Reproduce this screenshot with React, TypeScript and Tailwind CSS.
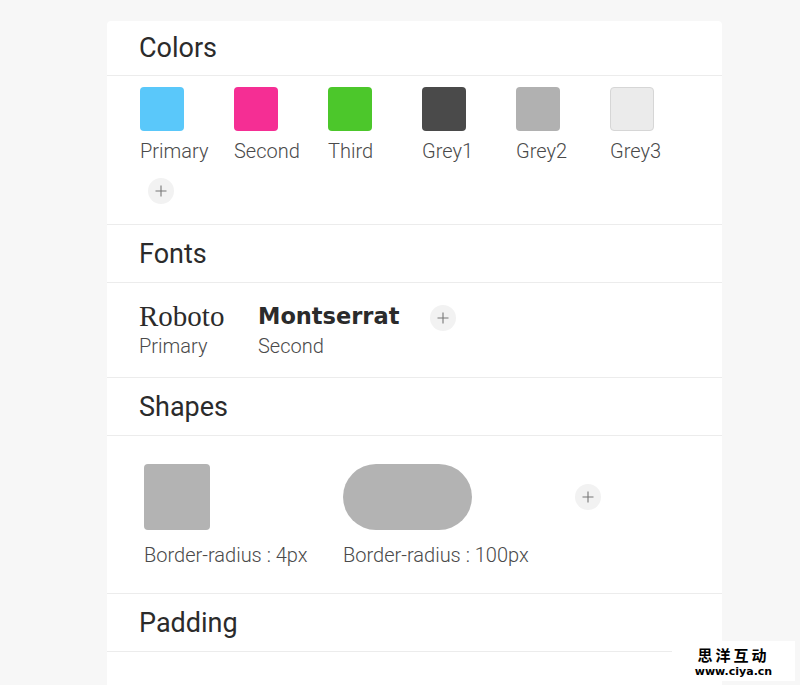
import React from "react"

const colors = [
    { name: "Primary", bg: "bg-[#5ac8fa]" },
    { name: "Second", bg: "bg-[#f52e94]" },
    { name: "Third", bg: "bg-[#4cc72b]" },
    { name: "Grey1", bg: "bg-[#4a4a4a]" },
    { name: "Grey2", bg: "bg-[#b1b1b1]" },
    { name: "Grey3", bg: "bg-[#ebebeb] border border-[#d6d6d6]" },
]

const PlusButton = ({ className = "" }: { className?: string }) => (
    <div className={`w-[26px] h-[26px] rounded-full bg-[#f2f2f2] flex items-center justify-center ${className}`}>
        <svg width="12" height="12" viewBox="0 0 12 12">
            <path d="M6 0.5v11M0.5 6h11" stroke="#777" strokeWidth="1.1" />
        </svg>
    </div>
)

const Header = ({ title, first = false }: { title: string; first?: boolean }) => (
    <div className={`${first ? "h-[55px]" : "h-[58px] pt-[2px]"} border-b border-[#ececec] flex items-center pl-8`}>
        <h2 className="text-[27px] text-[#2b2b2b] font-normal">{title}</h2>
    </div>
)

export default function App() {
    return (
        <div className="h-[685px] overflow-hidden bg-[#f7f7f7] relative font-['Roboto',sans-serif]">
            <div className="ml-[107px] mt-[21px] w-[615px] bg-white rounded-t-[4px]">

                <Header title="Colors" first />
                <div className="h-[149px] border-b border-[#ececec] pl-[33px] pt-[11px]">
                    <div className="flex">
                        {colors.map((c) => (
                            <div key={c.name} className="w-[94px] flex flex-col">
                                <div className={`w-[44px] h-[44px] rounded-[4px] ${c.bg}`}></div>
                                <p className="mt-[10px] text-[20px] leading-none font-light text-[#4a4a4a]">{c.name}</p>
                            </div>
                        ))}
                    </div>
                    <PlusButton className="ml-[8px] mt-[17px]" />
                </div>

                <Header title="Fonts" />
                <div className="h-[95px] border-b border-[#ececec] pl-8 pt-[19px] flex items-start">
                    <div className="w-[119px] flex flex-col">
                        <p className="h-[28px] text-[29px] leading-[28px] text-[#2b2b2b] font-['Liberation_Serif',serif]">Roboto</p>
                        <p className="mt-[6px] text-[20px] leading-none font-light text-[#4a4a4a]">Primary</p>
                    </div>
                    <div className="w-[172px] flex flex-col">
                        <p className="h-[28px] text-[22.5px] leading-[28px] font-bold text-[#2b2b2b] font-['DejaVu_Sans',sans-serif]">Montserrat</p>
                        <p className="mt-[6px] text-[20px] leading-none font-light text-[#4a4a4a]">Second</p>
                    </div>
                    <PlusButton className="mt-[3px]" />
                </div>

                <Header title="Shapes" />
                <div className="h-[158px] border-b border-[#ececec] pl-[37px] pt-[28px] flex items-start">
                    <div className="w-[199px] flex flex-col">
                        <div className="w-[66px] h-[66px] rounded-[4px] bg-[#b3b3b3]"></div>
                        <p className="mt-[15px] text-[20px] leading-none font-light text-[#4a4a4a]">Border-radius : 4px</p>
                    </div>
                    <div className="w-[232px] flex flex-col">
                        <div className="w-[129px] h-[66px] rounded-full bg-[#b3b3b3]"></div>
                        <p className="mt-[15px] text-[20px] leading-none font-light text-[#4a4a4a]">Border-radius : 100px</p>
                    </div>
                    <PlusButton className="mt-[20px]" />
                </div>

                <Header title="Padding" />
                <div className="h-[40px]"></div>
            </div>

            <div className="absolute left-[672px] top-[641px] w-[123px] h-[40px] bg-white flex flex-col items-center justify-center">
                <span className="text-[15px] leading-[21px] font-bold tracking-[3px] text-black font-['Noto_Sans_CJK_SC',sans-serif]">思洋互动</span>
                <span className="text-[11px] leading-[14px] font-bold text-black font-['DejaVu_Sans',sans-serif]">www.ciya.cn</span>
            </div>
        </div>
    )
}
